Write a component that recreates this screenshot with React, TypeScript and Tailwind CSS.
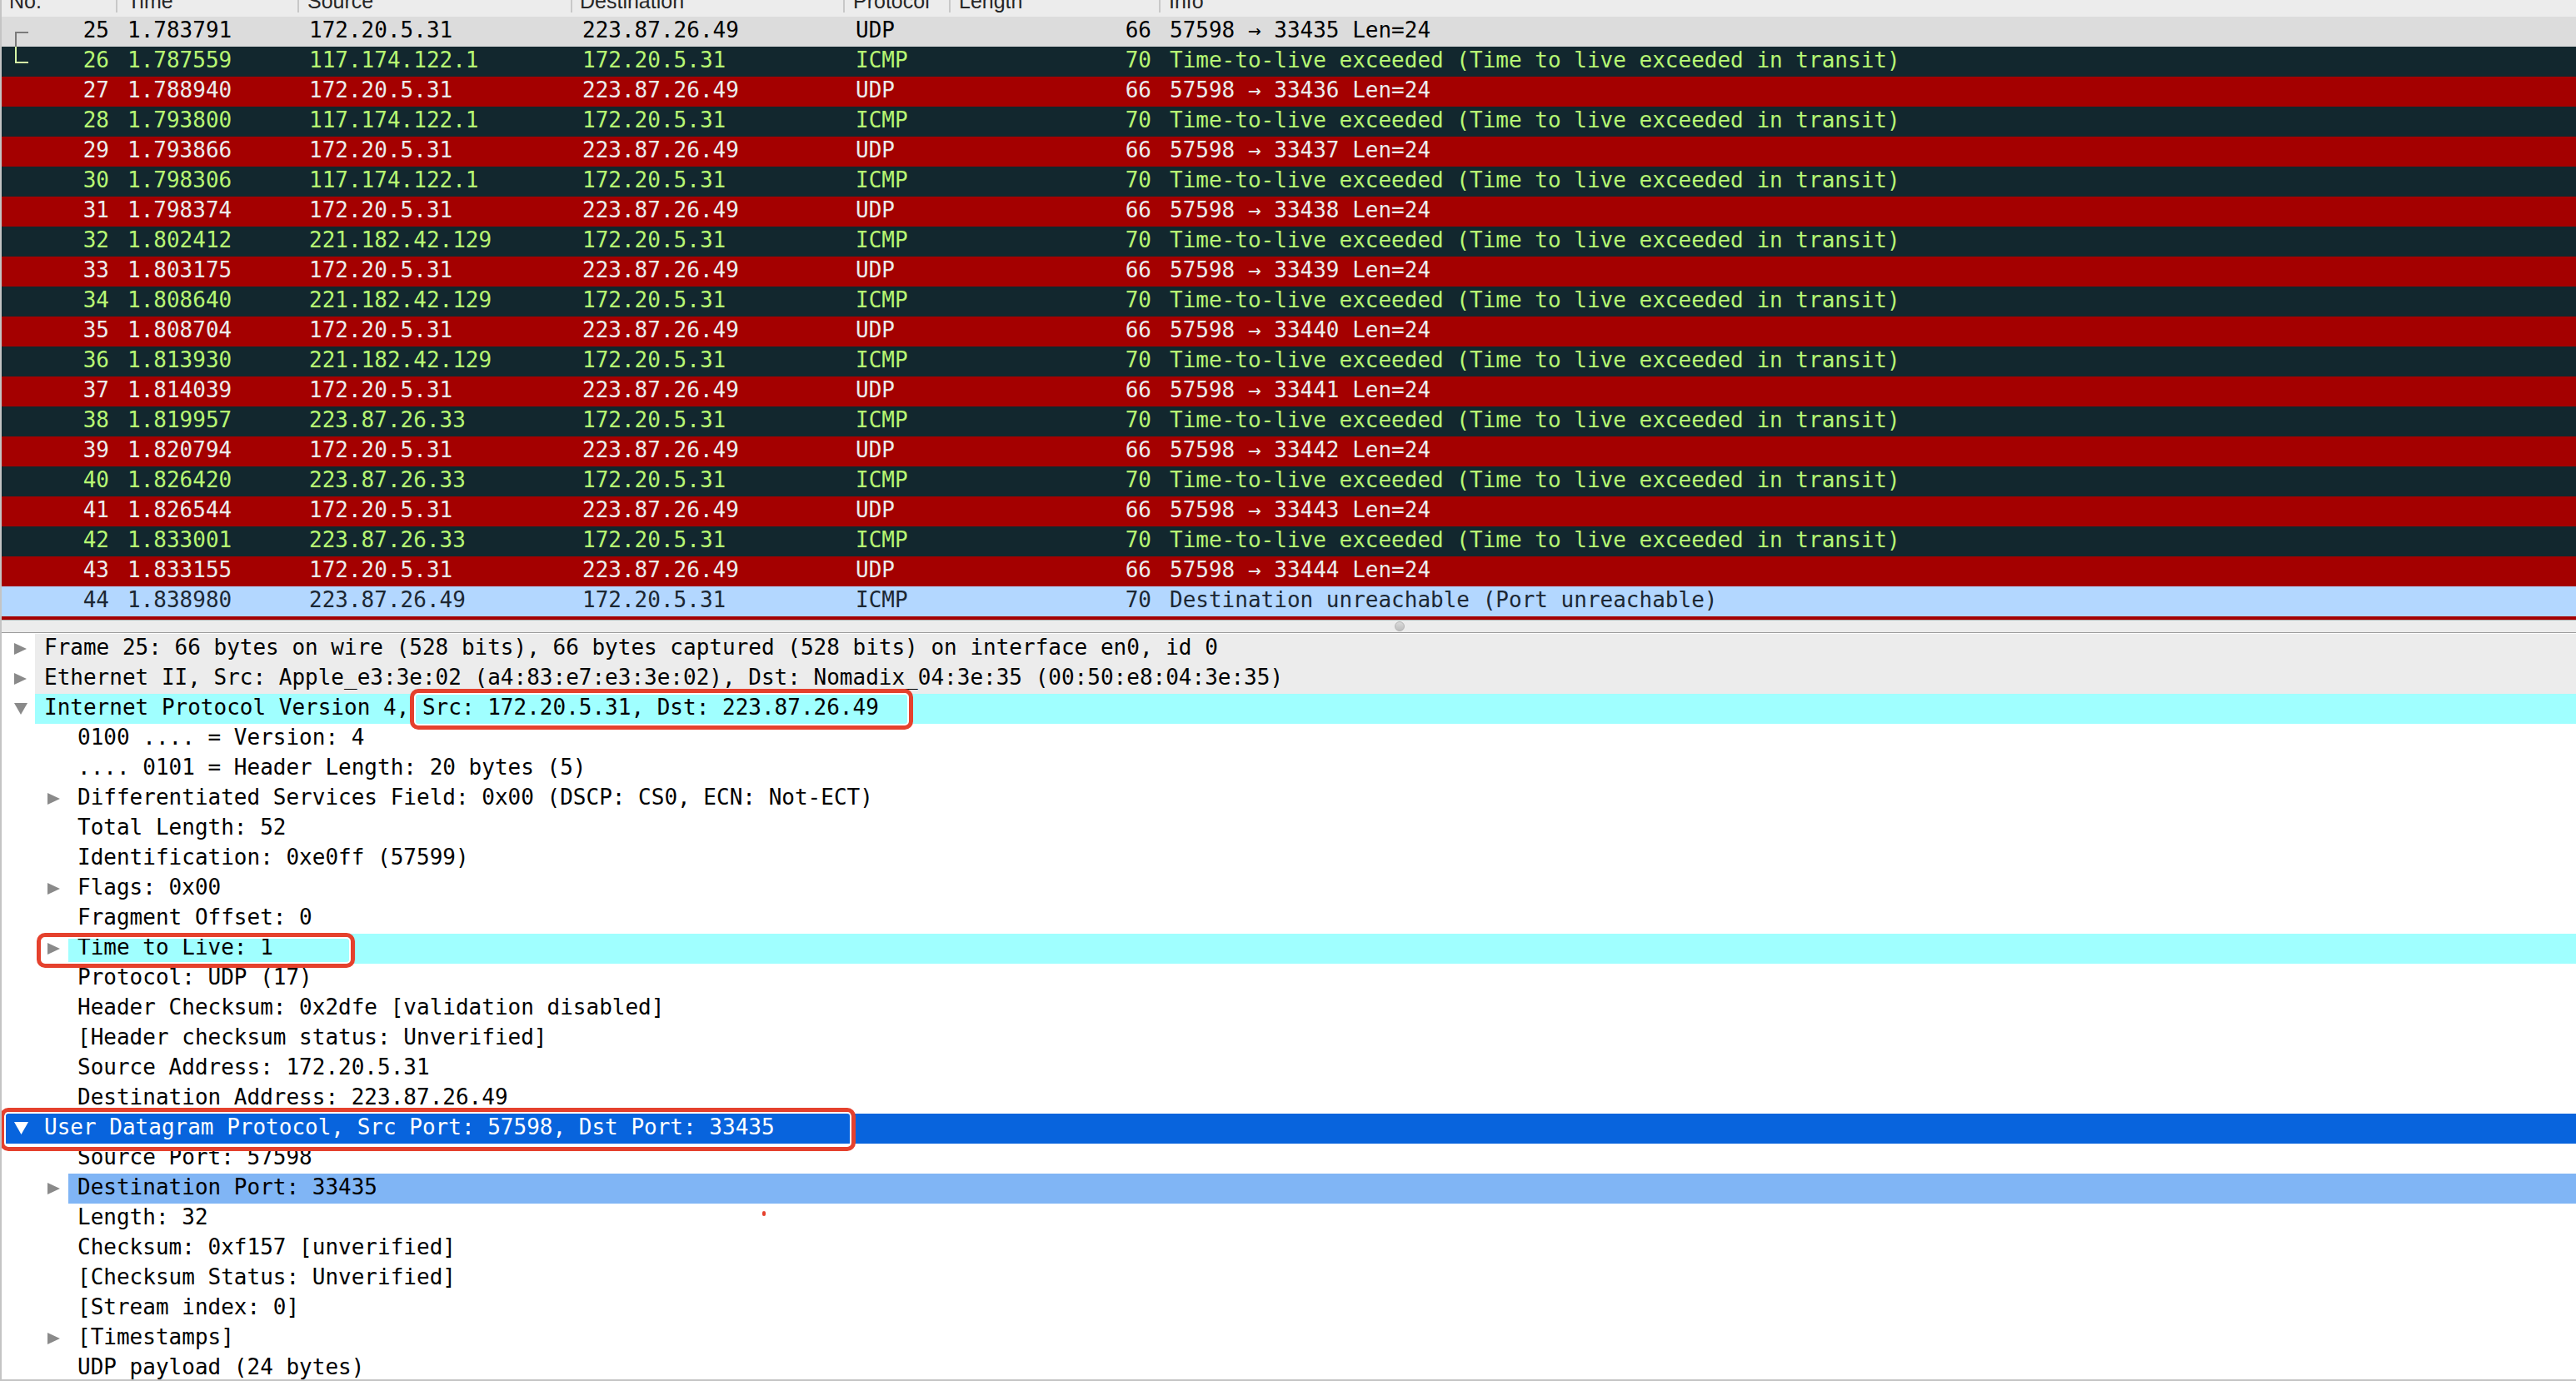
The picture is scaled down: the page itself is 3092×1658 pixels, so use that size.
import React from "react";

type Kind = "sel" | "icmp" | "udp" | "blue";
type PRow = [number, string, string, string, string, number, string, Kind];

const TTL = "Time-to-live exceeded (Time to live exceeded in transit)";
const udp = (p: number) => `57598 → ${p} Len=24`;

const packets: PRow[] = [
  [25, "1.783791", "172.20.5.31", "223.87.26.49", "UDP", 66, udp(33435), "sel"],
  [26, "1.787559", "117.174.122.1", "172.20.5.31", "ICMP", 70, TTL, "icmp"],
  [27, "1.788940", "172.20.5.31", "223.87.26.49", "UDP", 66, udp(33436), "udp"],
  [28, "1.793800", "117.174.122.1", "172.20.5.31", "ICMP", 70, TTL, "icmp"],
  [29, "1.793866", "172.20.5.31", "223.87.26.49", "UDP", 66, udp(33437), "udp"],
  [30, "1.798306", "117.174.122.1", "172.20.5.31", "ICMP", 70, TTL, "icmp"],
  [31, "1.798374", "172.20.5.31", "223.87.26.49", "UDP", 66, udp(33438), "udp"],
  [32, "1.802412", "221.182.42.129", "172.20.5.31", "ICMP", 70, TTL, "icmp"],
  [33, "1.803175", "172.20.5.31", "223.87.26.49", "UDP", 66, udp(33439), "udp"],
  [34, "1.808640", "221.182.42.129", "172.20.5.31", "ICMP", 70, TTL, "icmp"],
  [35, "1.808704", "172.20.5.31", "223.87.26.49", "UDP", 66, udp(33440), "udp"],
  [36, "1.813930", "221.182.42.129", "172.20.5.31", "ICMP", 70, TTL, "icmp"],
  [37, "1.814039", "172.20.5.31", "223.87.26.49", "UDP", 66, udp(33441), "udp"],
  [38, "1.819957", "223.87.26.33", "172.20.5.31", "ICMP", 70, TTL, "icmp"],
  [39, "1.820794", "172.20.5.31", "223.87.26.49", "UDP", 66, udp(33442), "udp"],
  [40, "1.826420", "223.87.26.33", "172.20.5.31", "ICMP", 70, TTL, "icmp"],
  [41, "1.826544", "172.20.5.31", "223.87.26.49", "UDP", 66, udp(33443), "udp"],
  [42, "1.833001", "223.87.26.33", "172.20.5.31", "ICMP", 70, TTL, "icmp"],
  [43, "1.833155", "172.20.5.31", "223.87.26.49", "UDP", 66, udp(33444), "udp"],
  [44, "1.838980", "223.87.26.49", "172.20.5.31", "ICMP", 70, "Destination unreachable (Port unreachable)", "blue"],
];

const kindCls: Record<Kind, string> = {
  sel: "bg-[#dcdcdc] text-black",
  icmp: "bg-[#12272e] text-[#b7f774]",
  udp: "bg-[#a40000] text-[#ececec]",
  blue: "bg-[#b3d7ff] text-[#1c2733]",
};

function HeaderCell({ w, pl, label, sep = true }: { w: string; pl: string; label: string; sep?: boolean }) {
  return (
    <div className={`${w} ${sep ? "border-r-2 border-[#c8c8c8]" : "flex-1"} h-[15px] overflow-hidden shrink-0`}>
      <div className={`${pl} mt-[-12px] leading-[26px] text-[25px] text-[#262626] font-['Liberation_Sans',Arial,sans-serif] whitespace-pre`}>
        {label}
      </div>
    </div>
  );
}

function PacketRow({ r }: { r: PRow }) {
  const [no, time, src, dst, proto, len, info, kind] = r;
  return (
    <div className={`flex h-[36px] shrink-0 leading-[32px] whitespace-pre ${kindCls[kind]}`}>
      <div className="relative w-[139px] shrink-0 text-right pr-[10px]">
        {no === 25 && (
          <svg className="absolute left-[16px] top-0" width="17" height="36" viewBox="0 0 17 36">
            <path d="M1 36 V19 H16" fill="none" stroke="#7a7a7a" strokeWidth="2" />
          </svg>
        )}
        {no === 26 && (
          <svg className="absolute left-[16px] top-0" width="17" height="36" viewBox="0 0 17 36">
            <path d="M1 0 V19 H16" fill="none" stroke="#d6f7a6" strokeWidth="2" />
          </svg>
        )}
        {no}
      </div>
      <div className="w-[218px] shrink-0 pl-[12px]">{time}</div>
      <div className="w-[328px] shrink-0 pl-[12px]">{src}</div>
      <div className="w-[327px] shrink-0 pl-[12px]">{dst}</div>
      <div className="w-[127px] shrink-0 pl-[13px]">{proto}</div>
      <div className="w-[252px] shrink-0 text-right pr-[11px]">{len}</div>
      <div className="flex-1 pl-[11px]">{info}</div>
    </div>
  );
}

type Exp = "none" | "right" | "down";
type HL = "none" | "gray" | "cyan" | "sel" | "lblue";
type DRow = { level: 0 | 1; text: string; exp?: Exp; hl?: HL };

const details: DRow[] = [
  { level: 0, text: "Frame 25: 66 bytes on wire (528 bits), 66 bytes captured (528 bits) on interface en0, id 0", exp: "right", hl: "gray" },
  { level: 0, text: "Ethernet II, Src: Apple_e3:3e:02 (a4:83:e7:e3:3e:02), Dst: Nomadix_04:3e:35 (00:50:e8:04:3e:35)", exp: "right", hl: "gray" },
  { level: 0, text: "Internet Protocol Version 4, Src: 172.20.5.31, Dst: 223.87.26.49", exp: "down", hl: "cyan" },
  { level: 1, text: "0100 .... = Version: 4" },
  { level: 1, text: ".... 0101 = Header Length: 20 bytes (5)" },
  { level: 1, text: "Differentiated Services Field: 0x00 (DSCP: CS0, ECN: Not-ECT)", exp: "right" },
  { level: 1, text: "Total Length: 52" },
  { level: 1, text: "Identification: 0xe0ff (57599)" },
  { level: 1, text: "Flags: 0x00", exp: "right" },
  { level: 1, text: "Fragment Offset: 0" },
  { level: 1, text: "Time to Live: 1", exp: "right", hl: "cyan" },
  { level: 1, text: "Protocol: UDP (17)" },
  { level: 1, text: "Header Checksum: 0x2dfe [validation disabled]" },
  { level: 1, text: "[Header checksum status: Unverified]" },
  { level: 1, text: "Source Address: 172.20.5.31" },
  { level: 1, text: "Destination Address: 223.87.26.49" },
  { level: 0, text: "User Datagram Protocol, Src Port: 57598, Dst Port: 33435", exp: "down", hl: "sel" },
  { level: 1, text: "Source Port: 57598" },
  { level: 1, text: "Destination Port: 33435", exp: "right", hl: "lblue" },
  { level: 1, text: "Length: 32" },
  { level: 1, text: "Checksum: 0xf157 [unverified]" },
  { level: 1, text: "[Checksum Status: Unverified]" },
  { level: 1, text: "[Stream index: 0]" },
  { level: 1, text: "[Timestamps]", exp: "right" },
  { level: 1, text: "UDP payload (24 bytes)" },
];

function Triangle({ exp, white }: { exp: Exp; white: boolean }) {
  if (exp === "right")
    return (
      <svg width="15" height="14" viewBox="0 0 15 14">
        <polygon points="0,0 15,7 0,14" fill="#8a8a8a" />
      </svg>
    );
  if (exp === "down")
    return white ? (
      <svg width="17" height="15" viewBox="0 0 17 15" className="mt-[-1px]">
        <polygon points="0,0 17,0 8.5,15" fill="#ffffff" />
      </svg>
    ) : (
      <svg width="16" height="14" viewBox="0 0 16 14">
        <polygon points="0,0 16,0 8,14" fill="#8a8a8a" />
      </svg>
    );
  return null;
}

function DetailRow({ d }: { d: DRow }) {
  const hl = d.hl ?? "none";
  const exp = d.exp ?? "none";
  const sel = hl === "sel";
  const hlBg =
    hl === "gray" ? "bg-[#ececec]" : hl === "cyan" ? "bg-[#a0ffff]" : hl === "lblue" ? "bg-[#80b5f5]" : "";
  return (
    <div className={`flex h-[36px] leading-[32px] whitespace-pre shrink-0 ${sel ? "bg-[#0864dd] text-white" : "text-black"}`}>
      <div className={`flex items-start pt-[11px] shrink-0 ${d.level === 0 ? "w-[40px] pl-[15px]" : "w-[80px] pl-[55px]"}`}>
        <Triangle exp={exp} white={sel} />
      </div>
      <div className={`flex-1 pl-[11px] ${hlBg}`}>{d.text}</div>
    </div>
  );
}

function RedBox({ cls }: { cls: string }) {
  return (
    <div
      className={`absolute ${cls} border-[5px] border-[#e5412d] rounded-[10px] shadow-[inset_0_0_0_2px_#ffffff] pointer-events-none`}
    />
  );
}

export default function App() {
  return (
    <div className="relative w-[3092px] h-[1658px] overflow-hidden bg-white border-l-2 border-b-2 border-[#c4c4c4] flex flex-col font-['DejaVu_Sans_Mono','Liberation_Mono',monospace] text-[26px]">
      {/* Packet list */}
      <div className="h-[745px] shrink-0 overflow-hidden border-b border-[#b4b4b4] flex flex-col">
        <div className="h-[20px] shrink-0 bg-[#ececec] flex items-start">
          <HeaderCell w="w-[139px]" pl="pl-[9px]" label="No." />
          <HeaderCell w="w-[218px]" pl="pl-[12px]" label="Time" />
          <HeaderCell w="w-[328px]" pl="pl-[10px]" label="Source" />
          <HeaderCell w="w-[327px]" pl="pl-[9px]" label="Destination" />
          <HeaderCell w="w-[127px]" pl="pl-[10px]" label="Protocol" />
          <HeaderCell w="w-[252px]" pl="pl-[10px]" label="Length" />
          <HeaderCell w="" pl="pl-[10px]" label="Info" sep={false} />
        </div>
        {packets.map((r) => (
          <PacketRow key={r[0]} r={r} />
        ))}
        {/* next row (45), only its top edge is visible */}
        <div className="h-[36px] shrink-0 bg-[#a40000]" />
      </div>

      {/* Splitter */}
      <div className="h-[15px] shrink-0 bg-[#ececec] border-b border-[#9c9c9c] flex items-center">
        <div className="ml-[1672px] w-[12px] h-[12px] rounded-full bg-gradient-to-b from-[#dadada] to-[#bdbdbd] border border-[#b5b5b5]" />
      </div>

      {/* Details */}
      <div className="flex-1 overflow-hidden pt-[1px] flex flex-col">
        {details.map((d, i) => (
          <DetailRow key={i} d={d} />
        ))}
      </div>

      {/* Annotations */}
      <RedBox cls="left-[490px] top-[827px] w-[604px] h-[49px]" />
      <RedBox cls="left-[42px] top-[1120px] w-[382px] h-[42px]" />
      <RedBox cls="left-[-2px] top-[1330px] w-[1027px] h-[52px]" />
      <div className="absolute left-[913px] top-[1454px] w-[4px] h-[6px] rounded-full bg-[#e5412d]" />
    </div>
  );
}
